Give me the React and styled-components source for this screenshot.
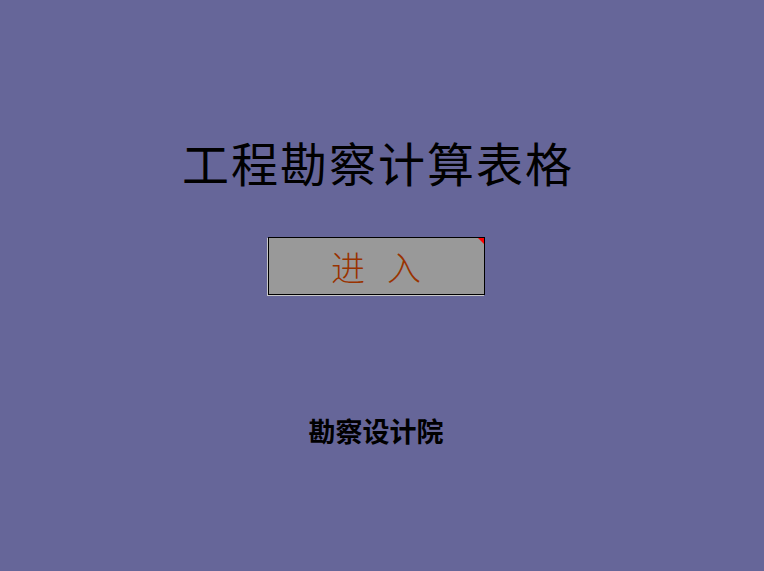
import styled, { createGlobalStyle } from 'styled-components'

const Global = createGlobalStyle`
  html, body {
    margin: 0;
    padding: 0;
    background: #666699;
  }
  body {
    font-family: "Noto Sans CJK SC", "Noto Sans", sans-serif;
  }
`

const Page = styled.div`
  width: 764px;
  height: 571px;
  display: flex;
  flex-direction: column;
  align-items: center;
  padding-top: 132px;
  box-sizing: border-box;
`

const Title = styled.h1`
  margin: 0;
  margin-left: -8px;
  font-size: 47px;
  font-weight: 400;
  line-height: 60px;
  letter-spacing: 2px;
  color: #000;
`

const EnterButton = styled.button`
  position: relative;
  margin-top: 45px;
  margin-left: -12px;
  width: 217px;
  height: 58px;
  background: #999999;
  border: 1px solid #000;
  box-shadow: -1px 1px 0 #c8c8c8;
  color: #993300;
  font-family: "Noto Sans CJK SC", sans-serif;
  font-size: 34px;
  font-weight: 300;
  letter-spacing: 22px;
  text-indent: 22px;
  padding: 0;
  cursor: pointer;

  &::after {
    content: '';
    position: absolute;
    top: 0;
    right: 0;
    border-top: 6px solid #ff0000;
    border-left: 6px solid transparent;
  }
`

const Footer = styled.div`
  margin-top: 116px;
  margin-left: -12px;
  font-size: 27px;
  font-weight: 700;
  color: #000;
`

export default function App() {
  return (
    <>
      <Global />
      <Page>
        <Title>工程勘察计算表格</Title>
        <EnterButton>进入</EnterButton>
        <Footer>勘察设计院</Footer>
      </Page>
    </>
  )
}
